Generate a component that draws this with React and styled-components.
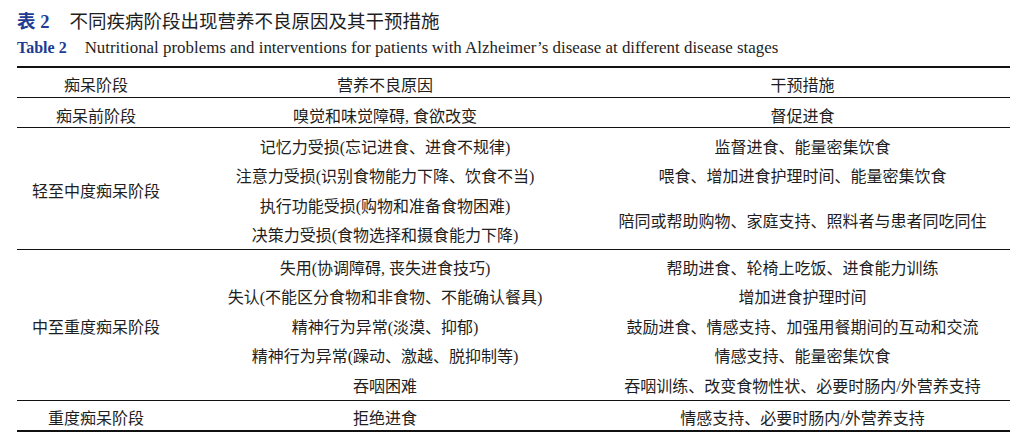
import React from "react";
import styled, { createGlobalStyle } from "styled-components";

const serif = `"Liberation Serif", "Noto Sans CJK SC", serif`;

const GlobalStyle = createGlobalStyle`
  html, body {
    margin: 0;
    padding: 0;
    background: #ffffff;
  }
  body {
    font-family: ${serif};
    color: #1e1e1e;
  }
`;

const Page = styled.div`
  width: 1029px;
  height: 444px;
  padding: 6px 0 0 17px;
  box-sizing: border-box;
  overflow: hidden;
`;

const Caption = styled.div`
  display: flex;
  align-items: center;
  height: ${(p) => p.$height}px;
  margin-bottom: ${(p) => p.$gap || 0}px;
  font-size: ${(p) => p.$size}px;
  white-space: nowrap;
`;

const Label = styled.span`
  font-weight: 700;
  color: #1d3c92;
  font-size: ${(p) => (p.$fs ? `${p.$fs}px` : "inherit")};
  margin-right: ${(p) => p.$space}px;
`;

const Table = styled.div`
  width: 993px;
  border-top: 2px solid #111;
  border-bottom: 2px solid #111;
  font-size: 16px;
`;

const Group = styled.div`
  display: grid;
  grid-template-columns: 158px 420px 1fr;
  grid-template-rows: repeat(${(p) => p.$rows}, ${(p) => p.$row}px);
  padding-top: ${(p) => p.$pad}px;
  border-bottom: ${(p) => (p.$last ? "none" : "1px solid #111")};
`;

const Cell = styled.div`
  display: flex;
  align-items: center;
  justify-content: center;
  white-space: nowrap;
  grid-column: ${(p) => p.$col};
  grid-row: ${(p) => p.$span || "auto"};
`;

const groups = [
  {
    stage: "痴呆前阶段",
    causes: ["嗅觉和味觉障碍, 食欲改变"],
    actions: [{ text: "督促进食" }],
    pad: 4,
    row: 25,
  },
  {
    stage: "轻至中度痴呆阶段",
    causes: [
      "记忆力受损(忘记进食、进食不规律)",
      "注意力受损(识别食物能力下降、饮食不当)",
      "执行功能受损(购物和准备食物困难)",
      "决策力受损(食物选择和摄食能力下降)",
    ],
    actions: [
      { text: "监督进食、能量密集饮食" },
      { text: "喂食、增加进食护理时间、能量密集饮食" },
      { text: "陪同或帮助购物、家庭支持、照料者与患者同吃同住", span: 2 },
    ],
    pad: 3,
    row: 29.5,
  },
  {
    stage: "中至重度痴呆阶段",
    causes: [
      "失用(协调障碍, 丧失进食技巧)",
      "失认(不能区分食物和非食物、不能确认餐具)",
      "精神行为异常(淡漠、抑郁)",
      "精神行为异常(躁动、激越、脱抑制等)",
      "吞咽困难",
    ],
    actions: [
      { text: "帮助进食、轮椅上吃饭、进食能力训练" },
      { text: "增加进食护理时间" },
      { text: "鼓励进食、情感支持、加强用餐期间的互动和交流" },
      { text: "情感支持、能量密集饮食" },
      { text: "吞咽训练、改变食物性状、必要时肠内/外营养支持" },
    ],
    pad: 2,
    row: 29.5,
  },
  {
    stage: "重度痴呆阶段",
    causes: ["拒绝进食"],
    actions: [{ text: "情感支持、必要时肠内/外营养支持" }],
    pad: 4,
    row: 25,
  },
];

const renderActions = (actions) => {
  let line = 1;
  return actions.map((item) => {
    const span = item.span || 1;
    const cell = (
      <Cell key={item.text} $col={3} $span={`${line} / span ${span}`}>
        {item.text}
      </Cell>
    );
    line += span;
    return cell;
  });
};

const App = () => {
  return (
    <Page>
      <GlobalStyle />
      <Caption $height={28} $gap={4} $size={18.5}>
        <Label $space={20}>表 2</Label>
        不同疾病阶段出现营养不良原因及其干预措施
      </Caption>
      <Caption $height={20} $gap={8} $size={16.9}>
        <Label $space={18} $fs={16}>
          Table 2
        </Label>
        Nutritional problems and interventions for patients with Alzheimer’s
        disease at different disease stages
      </Caption>
      <Table>
        <Group $rows={1} $row={26} $pad={3}>
          <Cell $col={1}>痴呆阶段</Cell>
          <Cell $col={2}>营养不良原因</Cell>
          <Cell $col={3}>干预措施</Cell>
        </Group>
        {groups.map((g, i) => (
          <Group
            key={g.stage}
            $rows={g.causes.length}
            $row={g.row}
            $pad={g.pad}
            $last={i === groups.length - 1}
          >
            <Cell $col={1} $span={`1 / span ${g.causes.length}`}>
              {g.stage}
            </Cell>
            {g.causes.map((c, j) => (
              <Cell key={c} $col={2} $span={`${j + 1}`}>
                {c}
              </Cell>
            ))}
            {renderActions(g.actions)}
          </Group>
        ))}
      </Table>
    </Page>
  );
};

export default App;
